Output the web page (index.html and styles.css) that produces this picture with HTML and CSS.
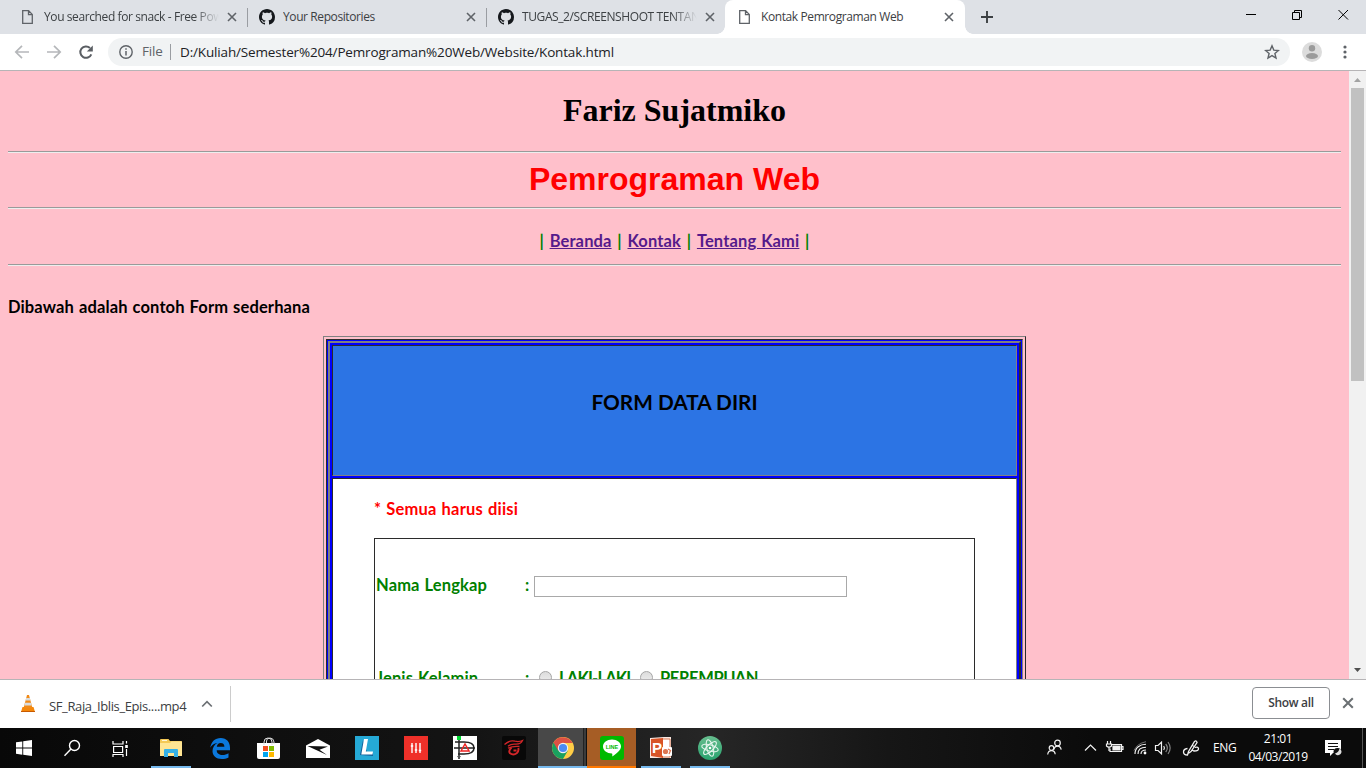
FILE: index.html
```html
<!DOCTYPE html>
<html lang="id">
<head>
<meta charset="utf-8">
<title>Kontak Pemrograman Web</title>
<link rel="stylesheet" href="styles.css">
</head>
<body>
<svg width="0" height="0" class="defs">
  <symbol id="page" viewBox="0 0 11 14"><path d="M1 .7h5.6L10.300 4.400V13.300H.7V.7zM6.500.8v3.800h3.700" fill="none" stroke="#5f6368" stroke-width="1.300"/></symbol>
  <symbol id="github" viewBox="0 0 16 16"><path fill="#15181c" d="M8 0C3.580 0 0 3.580 0 8c0 3.540 2.290 6.530 5.470 7.590.4.070.55-.17.55-.38 0-.19-.01-.82-.01-1.490-2.010.37-2.530-.49-2.690-.94-.09-.23-.48-.94-.82-1.130-.28-.15-.68-.52-.01-.53.63-.01 1.080.58 1.230.82.72 1.210 1.870.87 2.330.66.070-.52.28-.87.51-1.070-1.780-.2-3.640-.89-3.640-3.950 0-.87.31-1.590.82-2.150-.08-.2-.36-1.020.08-2.120 0 0 .67-.21 2.200.82.64-.18 1.320-.27 2-.27s1.360.09 2 .27c1.530-1.040 2.200-.82 2.200-.82.44 1.100.16 1.920.08 2.120.51.56.82 1.270.82 2.150 0 3.070-1.870 3.750-3.650 3.950.29.25.54.73.54 1.480 0 1.070-.01 1.930-.01 2.200 0 .21.15.46.55.38A8.010 8.010 0 0 0 16 8c0-4.420-3.580-8-8-8z"/></symbol>
  <symbol id="x" viewBox="0 0 10 10"><path d="M1 1l8 8M9 1l-8 8" stroke="#5f6368" stroke-width="1.600"/></symbol>
</svg>

<header class="tabs">
  <div class="tab tab-first"><svg class="i-page"><use href="#page"/></svg><span class="title fade">You searched for snack - Free Pow</span><svg class="i-x"><use href="#x"/></svg></div>
  <div class="tab tab-line"><svg class="i-git"><use href="#github"/></svg><span class="title">Your Repositories</span><svg class="i-x"><use href="#x"/></svg></div>
  <div class="tab tab-line"><svg class="i-git"><use href="#github"/></svg><span class="title fade">TUGAS_2/SCREENSHOOT TENTAN</span><svg class="i-x"><use href="#x"/></svg></div>
  <div class="tab active"><svg class="i-page"><use href="#page"/></svg><span class="title">Kontak Pemrograman Web</span><svg class="i-x"><use href="#x"/></svg></div>
  <svg class="plus" width="12" height="12" viewBox="0 0 12 12"><path d="M6 0v12M0 6h12" stroke="#3c4043" stroke-width="1.900"/></svg>
  <svg class="winbtns" width="104" height="12" viewBox="0 0 104 12" fill="none" stroke="#000" stroke-width="1"><path d="M0 5.500h10M46.500 3.500h7v7h-7zM48.500 3.500v-2h7v7h-2M92.500 1l9.500 9.500M102 1l-9.500 9.500"/></svg>
</header>

<div class="toolbar">
  <svg class="nav" width="100" height="36" viewBox="0 0 100 36" fill="none" stroke-width="1.700">
    <path d="M29 18H16.500M22 11.800L15.800 18l6.200 6.200M47 18h12.500M54 11.800l6.200 6.200-6.200 6.200" stroke="#b5b7ba"/>
    <path d="M91.300 20.300a5.700 5.700 0 1 1-1.300-6.300" stroke="#5a5e63" stroke-width="2"/><path d="M92.800 11.500v6h-6z" fill="#5a5e63"/>
  </svg>
  <div class="omnibox">
    <svg width="14" height="14" viewBox="0 0 14 14"><circle cx="7" cy="7" r="6.200" fill="none" stroke="#5f6368" stroke-width="1.400"/><path d="M7 6v4.500M7 3.300v1.500" stroke="#5f6368" stroke-width="1.500"/></svg>
    <span class="scheme">File</span>
    <span class="url">D:/Kuliah/Semester%204/Pemrograman%20Web/Website/Kontak.html</span>
    <svg class="star" width="16" height="16" viewBox="0 0 16 16"><path d="M8 1.800l1.800 4.300 4.600.4-3.500 3 1.100 4.500L8 11.600 4 14l1.100-4.500-3.500-3 4.600-.4z" fill="none" stroke="#5f6368" stroke-width="1.400"/></svg>
  </div>
  <svg class="avatar" width="20" height="20" viewBox="0 0 20 20"><circle cx="10" cy="10" r="10" fill="#dcdcdc"/><circle cx="10" cy="6.200" r="3.200" fill="#9b9b9b"/><ellipse cx="10" cy="14" rx="6" ry="3" fill="#9b9b9b"/></svg>
  <svg class="dots" width="4" height="14" viewBox="0 0 4 14" fill="#5f6368"><circle cx="2" cy="2" r="1.600"/><circle cx="2" cy="7" r="1.600"/><circle cx="2" cy="12" r="1.600"/></svg>
</div>

<div class="viewport">
  <main class="page">
    <h1 class="name">Fariz Sujatmiko</h1>
    <hr class="rule">
    <h2 class="subject">Pemrograman Web</h2>
    <hr class="rule">
    <nav class="menu">| <a href="#">Beranda</a> | <a href="#">Kontak</a> | <a href="#">Tentang Kami</a> |</nav>
    <hr class="rule">
    <p class="intro">Dibawah adalah contoh Form sederhana</p>
    <div class="outer">
      <div class="outer-cell">
        <div class="inner">
          <div class="cell form-head">FORM DATA DIRI</div>
          <div class="cell form-body">
            <p class="required">* Semua harus diisi</p>
            <div class="fields">
              <div class="row"><span class="label">Nama Lengkap</span><span class="colon">:</span><input class="text" type="text"></div>
              <div class="row row-two"><span class="label">Jenis Kelamin</span><span class="colon">:</span><i class="radio"></i><span class="opt opt-l">LAKI-LAKI</span><i class="radio"></i><span class="opt">PEREMPUAN</span></div>
            </div>
          </div>
        </div>
      </div>
    </div>
  </main>
  <div class="scroll">
    <svg width="17" height="17" viewBox="0 0 17 17"><path d="M5 11h7L8.500 7z" fill="#a3a3a3"/></svg>
    <div class="thumb"></div>
    <svg width="17" height="17" viewBox="0 0 17 17"><path d="M5 6h7l-3.500 4z" fill="#505050"/></svg>
  </div>
</div>

<div class="downloads">
  <svg class="vlc" width="14" height="17" viewBox="0 0 14 17"><path d="M1.500 12h11l1.500 5H0z" fill="#f58709"/><path d="M6 0h2l3.300 12.500q-4.300 2-8.600 0z" fill="#f18a17"/><path d="M5.200 3h3.600l.7 2.600h-5zM4 7.800h6l.7 2.600H3.300z" fill="#d9dcdd"/><path d="M0 16h14v1H0z" fill="#c85a00"/></svg>
  <span class="file">SF_Raja_Iblis_Epis....mp4</span>
  <svg class="up" width="12" height="8" viewBox="0 0 12 8"><path d="M1.200 6.500L6 1.700l4.800 4.800" fill="none" stroke="#6b6f73" stroke-width="1.700"/></svg>
  <span class="divider"></span>
  <button class="showall">Show all</button>
  <svg class="closebar" width="12" height="12" viewBox="0 0 10 10"><path d="M1 1l8 8M9 1l-8 8" stroke="#6b7073" stroke-width="1.700"/></svg>
</div>

<footer class="taskbar">
  <div class="task sys"><svg width="16" height="16" viewBox="0 0 16 16" fill="#fff"><path d="M0 2.300l6.300-.9v6.200H0zM7.200 1.200L16 0v7.600H7.200zM0 8.400h6.300v6.300L0 13.800zM7.200 8.400H16V16l-8.800-1.200z"/></svg></div>
  <div class="task sys"><svg width="18" height="18" viewBox="0 0 18 18" fill="none" stroke="#fff" stroke-width="1.400"><circle cx="11.500" cy="6.500" r="5"/><path d="M8 10L1.500 16.800"/></svg></div>
  <div class="task sys"><svg width="17" height="17" viewBox="0 0 17 17" fill="none" stroke="#fff" stroke-width="1.200"><path d="M1 1v3h10V1M1.600 6.500h9v6h-9zM1 17v-2.500h10V17M14.500 1v2.500M14.500 9v7"/><path d="M13.200 5h2.600v3h-2.600z" fill="#fff" stroke="none"/></svg></div>
  <div class="task open"><svg width="22" height="19" viewBox="0 0 22 19"><path d="M0 1q0-1 1-1h7.500l1.500 2h11q1 0 1 1v14H0z" fill="#f4c956"/><path d="M0 4h10l1.500-1.500H22V17H0z" fill="#ffe593"/><path d="M2 1h5v1H2z" fill="#fff6d7"/><path d="M4 18v-7q0-1 1-1h12q1 0 1 1v7h-4v-4H8v4z" fill="#36b1e7"/></svg></div>
  <div class="task"><svg width="20" height="21" viewBox="0 0 20 21"><path d="M.2 9.800C1.200 3.700 5 0 10.700 0 16.800 0 20 4.400 20 9.800v2.500H6.700c.1 3.300 2.700 4.700 5.700 4.700 2.300 0 4.300-.7 6.100-1.800v4.300c-2 1.100-4.300 1.500-6.700 1.500C6 21 2.500 17.700 2.500 13c0-3.700 2-6.500 5-8C4 5.200 1.600 7.300.2 9.800zM6.800 8.700h7.600c0-2-1.100-3.700-3.700-3.700-2.200 0-3.600 1.700-3.900 3.700z" fill="#0b78dc"/></svg></div>
  <div class="task"><svg width="23" height="22" viewBox="0 0 23 22"><path d="M0 6h23v14q0 2-2 2H2q-2 0-2-2z" fill="#fff"/><path d="M7 8V5q0-4 4-4t4 4v3M9.500 6V4q0-3 3.500-3t4 4v2" stroke="#ddd" fill="none"/><path d="M6 9h5v5H6z" fill="#f25022"/><path d="M12 9h5v5h-5z" fill="#7fba00"/><path d="M6 15h5v5H6z" fill="#00a4ef"/><path d="M12 15h5v5h-5z" fill="#ffb900"/></svg></div>
  <div class="task"><svg width="24" height="19" viewBox="0 0 24 19"><path d="M0 6.500L12 0l12 6.500V19H0z" fill="#fff"/><path d="M1.500 7L22 7.500 13.500 10.700 21 16z" fill="#101010"/></svg></div>
  <div class="task"><svg width="24" height="24" viewBox="0 0 24 24"><path d="M0 0h24v24H0z" fill="#25a9d6"/><path d="M8 4l-3 15 13 1v-3l-6-1z" fill="#15609a"/><path d="M9 3h4l-2.200 12.500H18l-.5 3H6.300z" fill="#fff"/></svg></div>
  <div class="task"><svg width="24" height="24" viewBox="0 0 24 24"><path d="M0 0h24v24H0z" fill="#ef3029"/><path d="M8 7v10M12 7v10M16 7v10" stroke="#fff" stroke-width="1.400"/><path d="M6.800 10h2.400M10.800 14h2.400M14.800 14.500h2.400" stroke="#fff" stroke-width="1.600"/></svg></div>
  <div class="task"><svg width="24" height="24" viewBox="0 0 24 24"><path d="M0 0h24v24H0z" fill="#fff"/><path d="M2 6h9q10 0 10 6t-10 6H5M6 4v19M1 12h21" fill="none" stroke="#222" stroke-width="1.500"/><path d="M8 15l4-7 4 7z" fill="none" stroke="#e22" stroke-width="1.500"/><path d="M4 0h4v4H4z" fill="#00d832"/><path d="M4 20h4l-2 3z" fill="#555"/></svg></div>
  <div class="task"><svg width="24" height="24" viewBox="0 0 24 24"><rect width="24" height="24" rx="2" fill="#080808"/><path d="M2.500 8.500Q8 3.700 13 5.200q4 1 7.500-.7-1.500 3.700-6.500 3.700-5-.7-8 2M6 12.300q4-2.300 11.500-1.800" fill="none" stroke="#d32629" stroke-width="1.300"/><path d="M9.500 11.500Q6 15 8 17.300q3.500 2.500 7-.3 2-2.300 1.300-5M11.500 14.500h3" fill="none" stroke="#d32629" stroke-width="1.900"/></svg></div>
  <div class="task chrome"><svg width="22" height="22" viewBox="0 0 22 22"><circle cx="11" cy="11" r="11" fill="#ffcd46"/><path d="M11 11L1.500 5.500A11 11 0 0 0 11 22l4.800-8.200z" fill="#19a15f"/><path d="M11 11L6.200 13.800 1.500 5.500A11 11 0 0 1 20.600 6H11z" fill="#dd5144"/><circle cx="11" cy="11" r="5.200" fill="#f1f1f1"/><circle cx="11" cy="11" r="4.100" fill="#4a8af4"/></svg></div>
  <div class="task line"><svg width="24" height="24" viewBox="0 0 24 24"><rect width="24" height="24" rx="3" fill="#00b900"/><path d="M12 3.500c5 0 9 3.100 9 7 0 3.500-4.500 7.200-8.800 10 .3-1.500.2-2.500-.2-3-5 0-9-3.100-9-7s4-7 9-7z" fill="#fff"/><text x="12" y="13" text-anchor="middle" class="line-logo">LINE</text></svg></div>
  <div class="task open"><svg width="22" height="22" viewBox="0 0 22 22"><path d="M0 1l14-1h7v21H0z" fill="#fae9e2"/><path d="M12 2h8v18h-8z" fill="#fff" stroke="#d77653"/><path d="M1 2l12-1v20L1 19z" fill="#d85427"/><text x="2" y="16" class="ppt-logo">P</text><rect x="12" y="10" width="10" height="9" rx="1" fill="#fff"/><circle cx="15.500" cy="14.500" r="2.600" fill="#dd7652"/><path d="M18 12l2.500 1.500L19 17" stroke="#dd7652" stroke-width="1.300" fill="none"/></svg></div>
  <div class="task open"><svg width="24" height="24" viewBox="0 0 24 24"><defs><linearGradient id="atom" x2="0" y2="1"><stop stop-color="#67bd8e"/><stop offset="1" stop-color="#29a36f"/></linearGradient></defs><circle cx="12" cy="12" r="12" fill="url(#atom)"/><g fill="none" stroke="#e5f5ed" stroke-width="1.100"><ellipse cx="12" cy="12" rx="8.500" ry="3.200" transform="rotate(15 12 12)"/><ellipse cx="12" cy="12" rx="8.500" ry="3.200" transform="rotate(75 12 12)"/><ellipse cx="12" cy="12" rx="8.500" ry="3.200" transform="rotate(135 12 12)"/></g><circle cx="12" cy="12" r="1.300" fill="#fff"/></svg></div>
  <div class="tray">
    <svg width="144" height="20" viewBox="0 0 144 20" fill="none" stroke="#f2f2f2" stroke-width="1.200">
      <circle cx="10.500" cy="5" r="2.800"/><path d="M7 11.500q.5-3.300 3.500-3.300t3.700 3.500"/><circle cx="4.500" cy="10" r="2.300"/><path d="M.7 16.500q.5-3.800 3.800-3.800t3.700 3.500"/>
      <path d="M38 12.500l5.500-5.500 5.500 5.500"/>
      <path d="M65 6.500h9.500v7H63v-3M74.500 8.500h1.500v3h-1.500"/><path d="M66 8h7v4h-7z" fill="#f2f2f2"/><path d="M60.500 3v3M63.500 3v3M59.500 6h5v2q-2.500 2.500-5 0zM62 9v4"/>
      <path d="M88 16C88 9.500 93 6.300 99 6.300M91 16c0-5 3.500-6.800 8-6.800M94 16c0-3 2-4 5-4" stroke-width="1.100"/><circle cx="98" cy="15" r="1.400" fill="#fff" stroke="none"/><path d="M87 12.500q3-7 12-8.800" stroke="#888" stroke-width=".8"/>
      <path d="M108.500 7.500h2.500l3.500-3.300v11.600l-3.500-3.300h-2.500z"/><path d="M116.700 8q1.500 2 0 4"/><path d="M118.700 6q3.300 4 0 8M121 4q4.300 6 0 12" stroke="#858585"/>
    </svg>
    <svg class="pen" width="18" height="18" viewBox="0 0 18 18" fill="none" stroke="#f2f2f2" stroke-width="1.300"><path d="M5.500 9.500Q1.500 10 1.500 13t4 3l1-3.500 6-10q2-1.500 2.500 1L9 12.500l-2.500 1.700M13 8.500q3.500-1 3.500 1.200T12 12l-2-1M10 6l2.500 1.800"/></svg>
    <span class="lang">ENG</span>
    <span class="clock"><span>21:01</span><span>04/03/2019</span></span>
    <svg class="note" width="17" height="18" viewBox="0 0 17 18"><path d="M0 1h16v13h-8l-3 3v-3H0z" fill="#fff"/><path d="M3 4.500h10M3 7.500h10M3 10.500h6" stroke="#111" stroke-width="1.200"/><circle cx="12.500" cy="13" r="4" fill="#111"/><path d="M14.500 9.500a3.500 3.500 0 1 1-4.500 5q3.800-1 4.500-5z" fill="#ddd"/></svg>
    <i class="peek"></i>
  </div>
</footer>
</body>
</html>
```
FILE: styles.css
```css
* { box-sizing: border-box; }
body { margin: 0; width: 1366px; height: 768px; overflow: hidden; display: flex; flex-direction: column; font-family: "Open Sans", "Noto Sans", sans-serif; font-size: 12px; color: #3c4043; background: #fff; }
svg { display: block; flex: none; }
.defs { position: absolute; }
span { white-space: nowrap; }

.tabs { height: 34px; flex: none; background: #dee1e6; display: flex; align-items: center; padding-left: 8px; }
.tab { width: 239px; height: 34px; display: flex; align-items: center; padding: 0 10px 0 13px; position: relative; }
.tab-line::before { content: ""; position: absolute; left: 0; top: 8px; width: 1px; height: 19px; background: #9a9da2; }
.tab-first { padding-left: 14px; }
.active { width: 240px; background: #fff; border-radius: 8px 8px 0 0; padding: 0 11px 0 14px; }
.active::before, .active::after { content: ""; position: absolute; bottom: 0; width: 8px; height: 8px; }
.active::before { left: -8px; background: radial-gradient(circle at 0 0, transparent 7.500px, #fff 8px); }
.active::after { right: -8px; background: radial-gradient(circle at 100% 0, transparent 7.500px, #fff 8px); }
.i-page { width: 11px; height: 14px; margin-right: 11px; }
.i-git { width: 16px; height: 16px; margin: 0 8px 0 -1px; }
.i-x { width: 10px; height: 10px; margin-left: auto; }
.title { overflow: hidden; width: 175px; line-height: 20px; letter-spacing: -.4px; }
.fade { -webkit-mask-image: linear-gradient(90deg, #000 150px, transparent 175px); mask-image: linear-gradient(90deg, #000 150px, transparent 175px); }
.plus { margin-left: 16px; }
.winbtns { margin: 0 16px 5px auto; }

.toolbar { height: 37px; flex: none; display: flex; align-items: center; border-bottom: 1px solid #b6b4b6; }
.omnibox { margin-left: 8px; width: 1182px; height: 28px; border-radius: 14px; background: #f1f3f4; display: flex; align-items: center; padding-left: 11px; font-size: 13.500px; }
.scheme { margin-left: 9px; width: 29px; height: 16px; line-height: 15px; color: #5f6368; border-right: 1px solid #9a9da2; letter-spacing: -.2px; }
.url { margin-left: 9px; color: #202124; letter-spacing: -.16px; }
.star { margin: 0 10px 0 auto; }
.avatar { margin-left: 12px; }
.dots { margin-left: 21px; }

.viewport { height: 608px; flex: none; display: flex; overflow: hidden; background: pink; }
.page { width: 1349px; height: 608px; overflow: hidden; padding: 0 8px; font: 700 16.500px Lato, sans-serif; letter-spacing: .13px; word-spacing: .8px; color: #000; }
.name { margin: 21px 0 22px; font: bold 32px/37px "Liberation Serif", serif; letter-spacing: 0; word-spacing: 0; text-align: center; }
.rule { margin: 0; height: 2px; border: 0; border-top: 1px solid #9a9a9a; background: #eee; }
.subject { margin: 8px 0 9px; font: bold 32px/37px "Liberation Sans", sans-serif; letter-spacing: 0; word-spacing: 0; text-align: center; color: #f00; }
.menu { margin: 21px 0 22px; height: 12px; line-height: 22px; text-align: center; color: green; word-spacing: 1.600px; }
.menu a { color: #551a8b; word-spacing: .8px; }
.intro { margin: 30px 0 18px; line-height: 22px; }

.outer { width: 703px; height: 900px; margin: 0 auto; border: 1px solid #808080; border-right-color: #2b2b2b; padding: 2px; }
.outer-cell { height: 100%; border: 1px solid #2b2b2b; border-right-color: #808080; background: #00f; padding: 1px; }
.inner { height: 100%; border: 2px solid #808080; border-right-color: #2b2b2b; padding: 2px; display: flex; flex-direction: column; gap: 2px; }
.cell { border: 1px solid #2b2b2b; border-right-color: #808080; border-bottom-color: #808080; }
.form-head { height: 131px; background: #2c74e4; display: flex; align-items: center; justify-content: center; padding-bottom: 19px; font-size: 20.800px; letter-spacing: 0; word-spacing: 0; }
.form-body { flex: 1; background: #fff; padding: 0 41px; }
.required { margin: 19px 0 18px; line-height: 22px; color: #f00; letter-spacing: .2px; }
.fields { height: 600px; border: 1px solid #2b2b2b; color: green; padding: 36px 1px; }
.row { display: flex; align-items: center; height: 23px; }
.row-two { margin-top: 68px; }
.label { width: 149px; padding-bottom: 4px; }
.colon { width: 9px; padding-bottom: 4px; }
.row-two span { padding: 0; }
.text { width: 313px; height: 21px; border: 1px solid #a9a9a9; background: #fff; padding: 0; }
.radio { width: 13px; height: 13px; flex: none; border-radius: 50%; border: 1px solid #a5a5a5; background: linear-gradient(#dcdcdc, #eee); margin: 0 7px 0 5px; }
.radio ~ .radio { margin-left: 4px; }
.opt { letter-spacing: -.4px; }
.opt-l { width: 77px; letter-spacing: -.8px; }

.scroll { width: 17px; background: #f1f1f1; display: flex; flex-direction: column; }
.thumb { width: 13px; height: 293px; margin: 0 auto auto; background: #c1c1c1; }

.downloads { height: 49px; flex: none; border-top: 1px solid #b6b4b6; background: #fff; display: flex; align-items: center; }
.vlc { margin: 0 14px 2px 21px; }
.file { width: 138px; font-size: 13px; letter-spacing: -.38px; margin-top: 4px; }
.up { margin-left: 14px; }
.divider { width: 1px; height: 36px; background: #ccc; margin-left: 17px; }
.showall { margin: 0 12px 2px auto; width: 78px; height: 32px; border: 1px solid #8b8e92; border-radius: 4px; background: #fff; color: #3c4043; font: 600 12px "Open Sans", sans-serif; letter-spacing: -.3px; padding: 0 0 1px; }
.closebar { margin: 0 12px 2px 0; }

.taskbar { height: 40px; flex: none; background: #0c0c0c linear-gradient(90deg, #080808, #141414 35%, #262626 52%, #161616 65%, #0b0b0b 80%); display: flex; }
.task { width: 49px; flex: none; display: flex; align-items: center; justify-content: center; position: relative; }
.sys { width: 48px; }
.sys:nth-child(3) { width: 50px; padding-right: 2px; }
.open::after { content: ""; position: absolute; left: 5px; right: 4px; bottom: 0; height: 2px; background: #76b9ed; }
.chrome { background: linear-gradient(90deg, #484848 45px, #222 45px, #222 46px, #3b3b3b 46px, #3b3b3b 48px, #111 48px); border-bottom: 2px solid #76b9ed; padding-top: 2px; }
.line { background: #a65d25; border-bottom: 2px solid #ff7800; padding-top: 2px; }
.line-logo { font: bold 5.500px "Liberation Sans", sans-serif; fill: #00b900; }
.ppt-logo { font: bold 15px "Liberation Sans", sans-serif; fill: #fff; }
.tray { margin-left: auto; display: flex; align-items: center; color: #fff; height: 40px; }
.pen { margin-left: -9px; }
.lang { margin: 0 0 1px 13px; width: 24px; letter-spacing: -.3px; }
.clock { width: 60px; margin-left: 11px; display: flex; flex-direction: column; align-items: center; line-height: 18px; letter-spacing: -.45px; }
.note { margin-left: 17px; }
.peek { width: 1px; height: 40px; background: #555; margin: 0 3px 0 20px; }
```
